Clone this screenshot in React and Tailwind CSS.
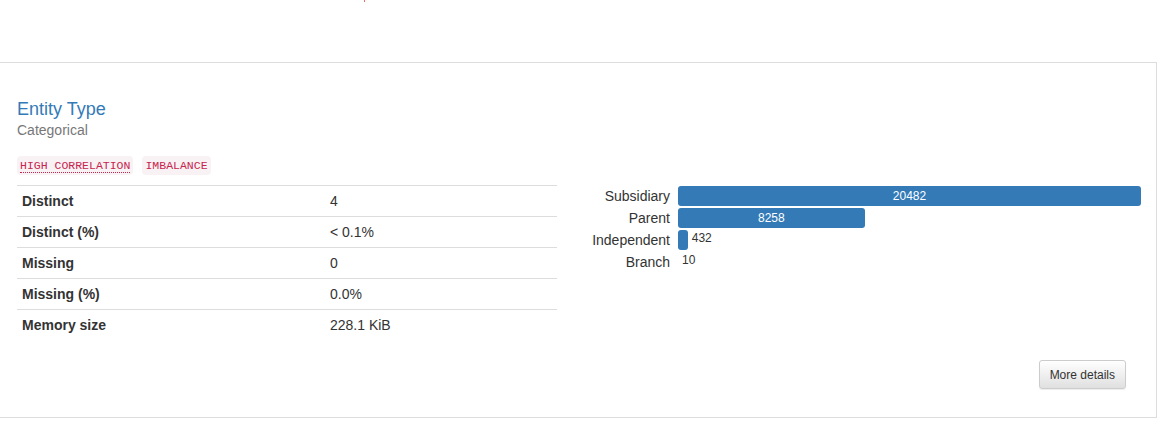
import React from "react";

const stats = [
  { label: "Distinct", value: "4" },
  { label: "Distinct (%)", value: "< 0.1%" },
  { label: "Missing", value: "0" },
  { label: "Missing (%)", value: "0.0%" },
  { label: "Memory size", value: "228.1 KiB" },
];

const counts = [
  { label: "Subsidiary", value: 20482 },
  { label: "Parent", value: 8258 },
  { label: "Independent", value: 432 },
  { label: "Branch", value: 10 },
];

const TRACK = 463;

function BarChart() {
  const max = Math.max(...counts.map((c) => c.value));
  return (
    <div className="mt-px flex flex-col gap-[2px]">
      {counts.map((c) => {
        const raw = (c.value / max) * TRACK;
        const w = raw < 1 ? 0 : raw;
        const inside = w > 60;
        return (
          <div key={c.label} className="flex items-center h-[20px]">
            <div className="w-[106px] pr-[8px] text-right text-[14px] leading-[20px] text-[#333]">
              {c.label}
            </div>
            <div className="flex items-center h-full">
              <div
                className="h-full bg-[#337ab7] rounded-[3px] flex items-center justify-center"
                style={{ width: w }}
              >
                {inside && <span className="text-white text-[12px] leading-none">{c.value}</span>}
              </div>
              {!inside && (
                <span className="ml-[4px] -mt-[5px] text-[12px] leading-none text-[#333]">{c.value}</span>
              )}
            </div>
          </div>
        );
      })}
    </div>
  );
}

export default function App() {
  return (
    <div className="font-['Liberation_Sans',Arial,sans-serif] text-[14px] text-[#333] bg-white w-[1157px] h-[421px] overflow-hidden">
      <div className="relative h-[62px]">
        <div className="absolute left-[364px] top-0 w-px h-[2px] bg-[#f06a6a]" />
      </div>

      <div className="border-t border-r border-b border-[#ddd] pl-[17px] pr-[15px] pt-[36px] pb-[28px]">
        <div className="text-[18px] leading-[20px] text-[#337ab7]">Entity Type</div>
        <div className="mt-px text-[14px] leading-[20px] text-[#777]">Categorical</div>

        <div className="mt-[16px] flex gap-[9px] font-['Liberation_Mono',monospace] text-[11.5px] leading-[15px] text-[#c7254e]">
          <span className="bg-[#f9f2f4] rounded-[4px] px-[3px] py-[2px]">
            <abbr className="no-underline border-b border-dotted border-[#c7254e]" title="High correlation">
              HIGH CORRELATION
            </abbr>
          </span>
          <span className="bg-[#f9f2f4] rounded-[4px] px-[3px] py-[2px]">IMBALANCE</span>
        </div>

        <div className="mt-[10px] flex">
          <table className="w-[540px] border-collapse">
            <tbody>
              {stats.map((s) => (
                <tr key={s.label} className="border-t border-[#ddd]">
                  <th className="w-[308px] p-[5px] text-left font-bold leading-[20px]">{s.label}</th>
                  <td className="p-[5px] leading-[20px]">{s.value}</td>
                </tr>
              ))}
            </tbody>
          </table>
          <div className="ml-[15px] flex-1">
            <BarChart />
          </div>
        </div>

        <div className="mt-[20px] flex justify-end">
          <button className="mr-[15px] h-[29px] px-[10px] text-[12px] text-[#333] rounded-[3px] border border-[#ccc] bg-gradient-to-b from-white to-[#e0e0e0] shadow-[0_1px_1px_rgba(0,0,0,0.075)]">
            More details
          </button>
        </div>
      </div>
    </div>
  );
}
